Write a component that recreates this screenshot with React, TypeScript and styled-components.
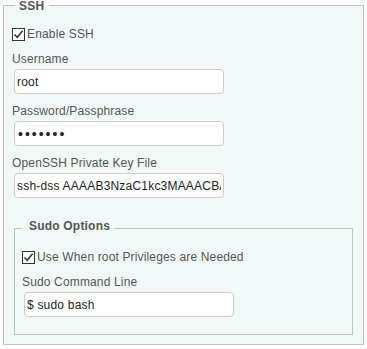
import React from "react";
import styled, { createGlobalStyle } from "styled-components";

const GlobalStyle = createGlobalStyle`
  html, body {
    margin: 0;
    padding: 0;
    background: #ffffff;
  }
  body {
    font-family: "Liberation Sans", Arial, sans-serif;
    font-size: 12px;
    color: #555555;
  }
`;

const Group = styled.fieldset<{ $inner?: boolean }>`
  box-sizing: border-box;
  margin: ${(p) => (p.$inner ? "25px 0 0 2px" : "0 0 0 3px")};
  width: ${(p) => (p.$inner ? "339px" : "361px")};
  border: 1px solid #c2c2c2;
  background: #f1f9f8;
  padding: ${(p) => (p.$inner ? "15px 7px 17px 7px" : "16px 8px 9px 8px")};
  min-width: 0;
`;

const Legend = styled.legend<{ $inner?: boolean }>`
  font-family: "Liberation Sans", Arial, sans-serif;
  font-weight: bold;
  font-size: 12px;
  letter-spacing: 0.2px;
  color: #555555;
  line-height: 7px;
  margin-left: ${(p) => (p.$inner ? "0" : "3px")};
  padding: ${(p) => (p.$inner ? "0 4px 4px 7px" : "3px 5px 0 4px")};
`;

const CheckRow = styled.label`
  display: flex;
  align-items: center;
  height: 16px;
  line-height: 15px;
  letter-spacing: 0.15px;
  color: #555555;
  cursor: default;
`;

const Box = styled.span`
  box-sizing: border-box;
  width: 13px;
  height: 13px;
  border: 1px solid #333333;
  background: #ffffff;
  display: flex;
  align-items: center;
  justify-content: center;
  margin-right: 2px;
  flex: none;
`;

const Field = styled.div`
  display: flex;
  flex-direction: column;
  align-items: flex-start;
  margin-top: 10px;
`;

const Label = styled.span`
  line-height: 15px;
  letter-spacing: 0.15px;
  color: #555555;
  margin-bottom: 2px;
`;

const TextInput = styled.input`
  box-sizing: border-box;
  width: 210px;
  height: 25px;
  margin: 0 0 0 2px;
  padding: 0 2px;
  border: 1px solid #cccccc;
  border-radius: 4px;
  background: #ffffff;
  font-family: "Liberation Sans", Arial, sans-serif;
  font-size: 12px;
  letter-spacing: 0.2px;
  color: #222222;
  outline: none;

  &[type="password"] {
    font-size: 14px;
    letter-spacing: 2px;
    padding-left: 3px;
  }
`;

function Check() {
  return (
    <Box>
      <svg width="11" height="11" viewBox="0 0 11 11">
        <path d="M1.5 5.5 L4.2 8.3 L9.6 1.8" fill="none" stroke="#333333" strokeWidth="1.5" />
      </svg>
    </Box>
  );
}

export default function App() {
  return (
    <>
      <GlobalStyle />
      <Group>
        <Legend>SSH</Legend>
        <CheckRow>
          <Check />
          Enable SSH
        </CheckRow>
        <Field>
          <Label>Username</Label>
          <TextInput type="text" defaultValue="root" />
        </Field>
        <Field>
          <Label>Password/Passphrase</Label>
          <TextInput type="password" defaultValue="1234567" />
        </Field>
        <Field>
          <Label>OpenSSH Private Key File</Label>
          <TextInput type="text" defaultValue="ssh-dss AAAAB3NzaC1kc3MAAACBA..." />
        </Field>
        <Group $inner>
          <Legend $inner>Sudo Options</Legend>
          <CheckRow>
            <Check />
            Use When root Privileges are Needed
          </CheckRow>
          <Field>
            <Label>Sudo Command Line</Label>
            <TextInput type="text" defaultValue="$ sudo bash" />
          </Field>
        </Group>
      </Group>
    </>
  );
}
